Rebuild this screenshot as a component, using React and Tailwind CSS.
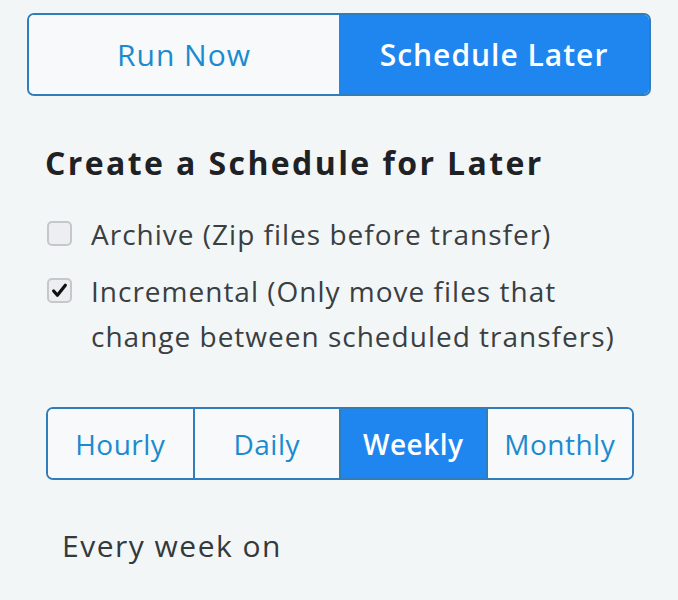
import React, { useState } from 'react';

const Checkbox = ({ checked }) => (
  <span className="mt-[9px] flex h-[25px] w-[25px] shrink-0 items-center justify-center rounded-[5px] border-2 border-[#c4c8cb] bg-[#eceef0]">
    {checked && (
      <svg viewBox="0 0 16 16" className="h-[17px] w-[17px]">
        <path d="M2.5 8.5 L6 12.5 L13.5 3" fill="none" stroke="#111" strokeWidth="3" strokeLinecap="round" strokeLinejoin="round" />
      </svg>
    )}
  </span>
);

const App = () => {
  const [mode, setMode] = useState('later');
  const [freq, setFreq] = useState('Weekly');
  const freqs = ['Hourly', 'Daily', 'Weekly', 'Monthly'];

  return (
    <div className="min-h-[600px] w-[678px] bg-[#f3f6f7] pl-[27px] pt-[13px] text-[#2b2f31]" style={{ fontFamily: '"Open Sans", Lato, sans-serif' }}>
      {/* Run mode */}
      <div className="flex h-[83px] w-[624px] overflow-hidden rounded-[7px] border-2 border-[#2f7dbd]">
        <button
          onClick={() => setMode('now')}
          className={`flex-1 text-[30px] tracking-[1px] ${mode === 'now' ? 'bg-[#1f86f0] font-semibold text-white' : 'bg-[#f7f9fa] text-[#1b8bcf]'}`}
        >
          Run Now
        </button>
        <button
          onClick={() => setMode('later')}
          className={`flex-1 text-[30px] tracking-[1px] ${mode === 'later' ? 'bg-[#1f86f0] font-semibold text-white' : 'bg-[#f7f9fa] text-[#1b8bcf]'}`}
        >
          Schedule Later
        </button>
      </div>

      <h2 className="ml-[18px] mt-[47px] text-[32px] font-bold leading-[40px] tracking-[2.4px] text-[#1f2224]">Create a Schedule for Later</h2>

      <div className="ml-[20px] mt-[29px] space-y-[12px] text-[28px] leading-[45px] tracking-[1px] text-[#3a3f42]">
        <label className="flex items-start gap-[19px]">
          <Checkbox checked={false} />
          <span>Archive (Zip files before transfer)</span>
        </label>
        <label className="flex items-start gap-[19px]">
          <Checkbox checked />
          <span>Incremental (Only move files that<br />change between scheduled transfers)</span>
        </label>
      </div>

      {/* Frequency */}
      <div className="ml-[19px] mt-[48px] flex h-[73px] w-[588px] overflow-hidden rounded-[7px] border-2 border-[#2f7dbd]">
        {freqs.map((f, i) => (
          <button
            key={f}
            onClick={() => setFreq(f)}
            className={`flex-1 text-[28px] tracking-[0.5px] ${i > 0 ? 'border-l-2 border-[#2f7dbd]' : ''} ${freq === f ? 'bg-[#1f86f0] font-semibold text-white' : 'bg-[#f7f9fa] text-[#1b8bcf]'}`}
          >
            {f}
          </button>
        ))}
      </div>

      <p className="ml-[35px] mt-[46px] text-[30px] leading-[40px] tracking-[1.5px] text-[#34393c]">Every week on</p>
    </div>
  );
};

export default App;
